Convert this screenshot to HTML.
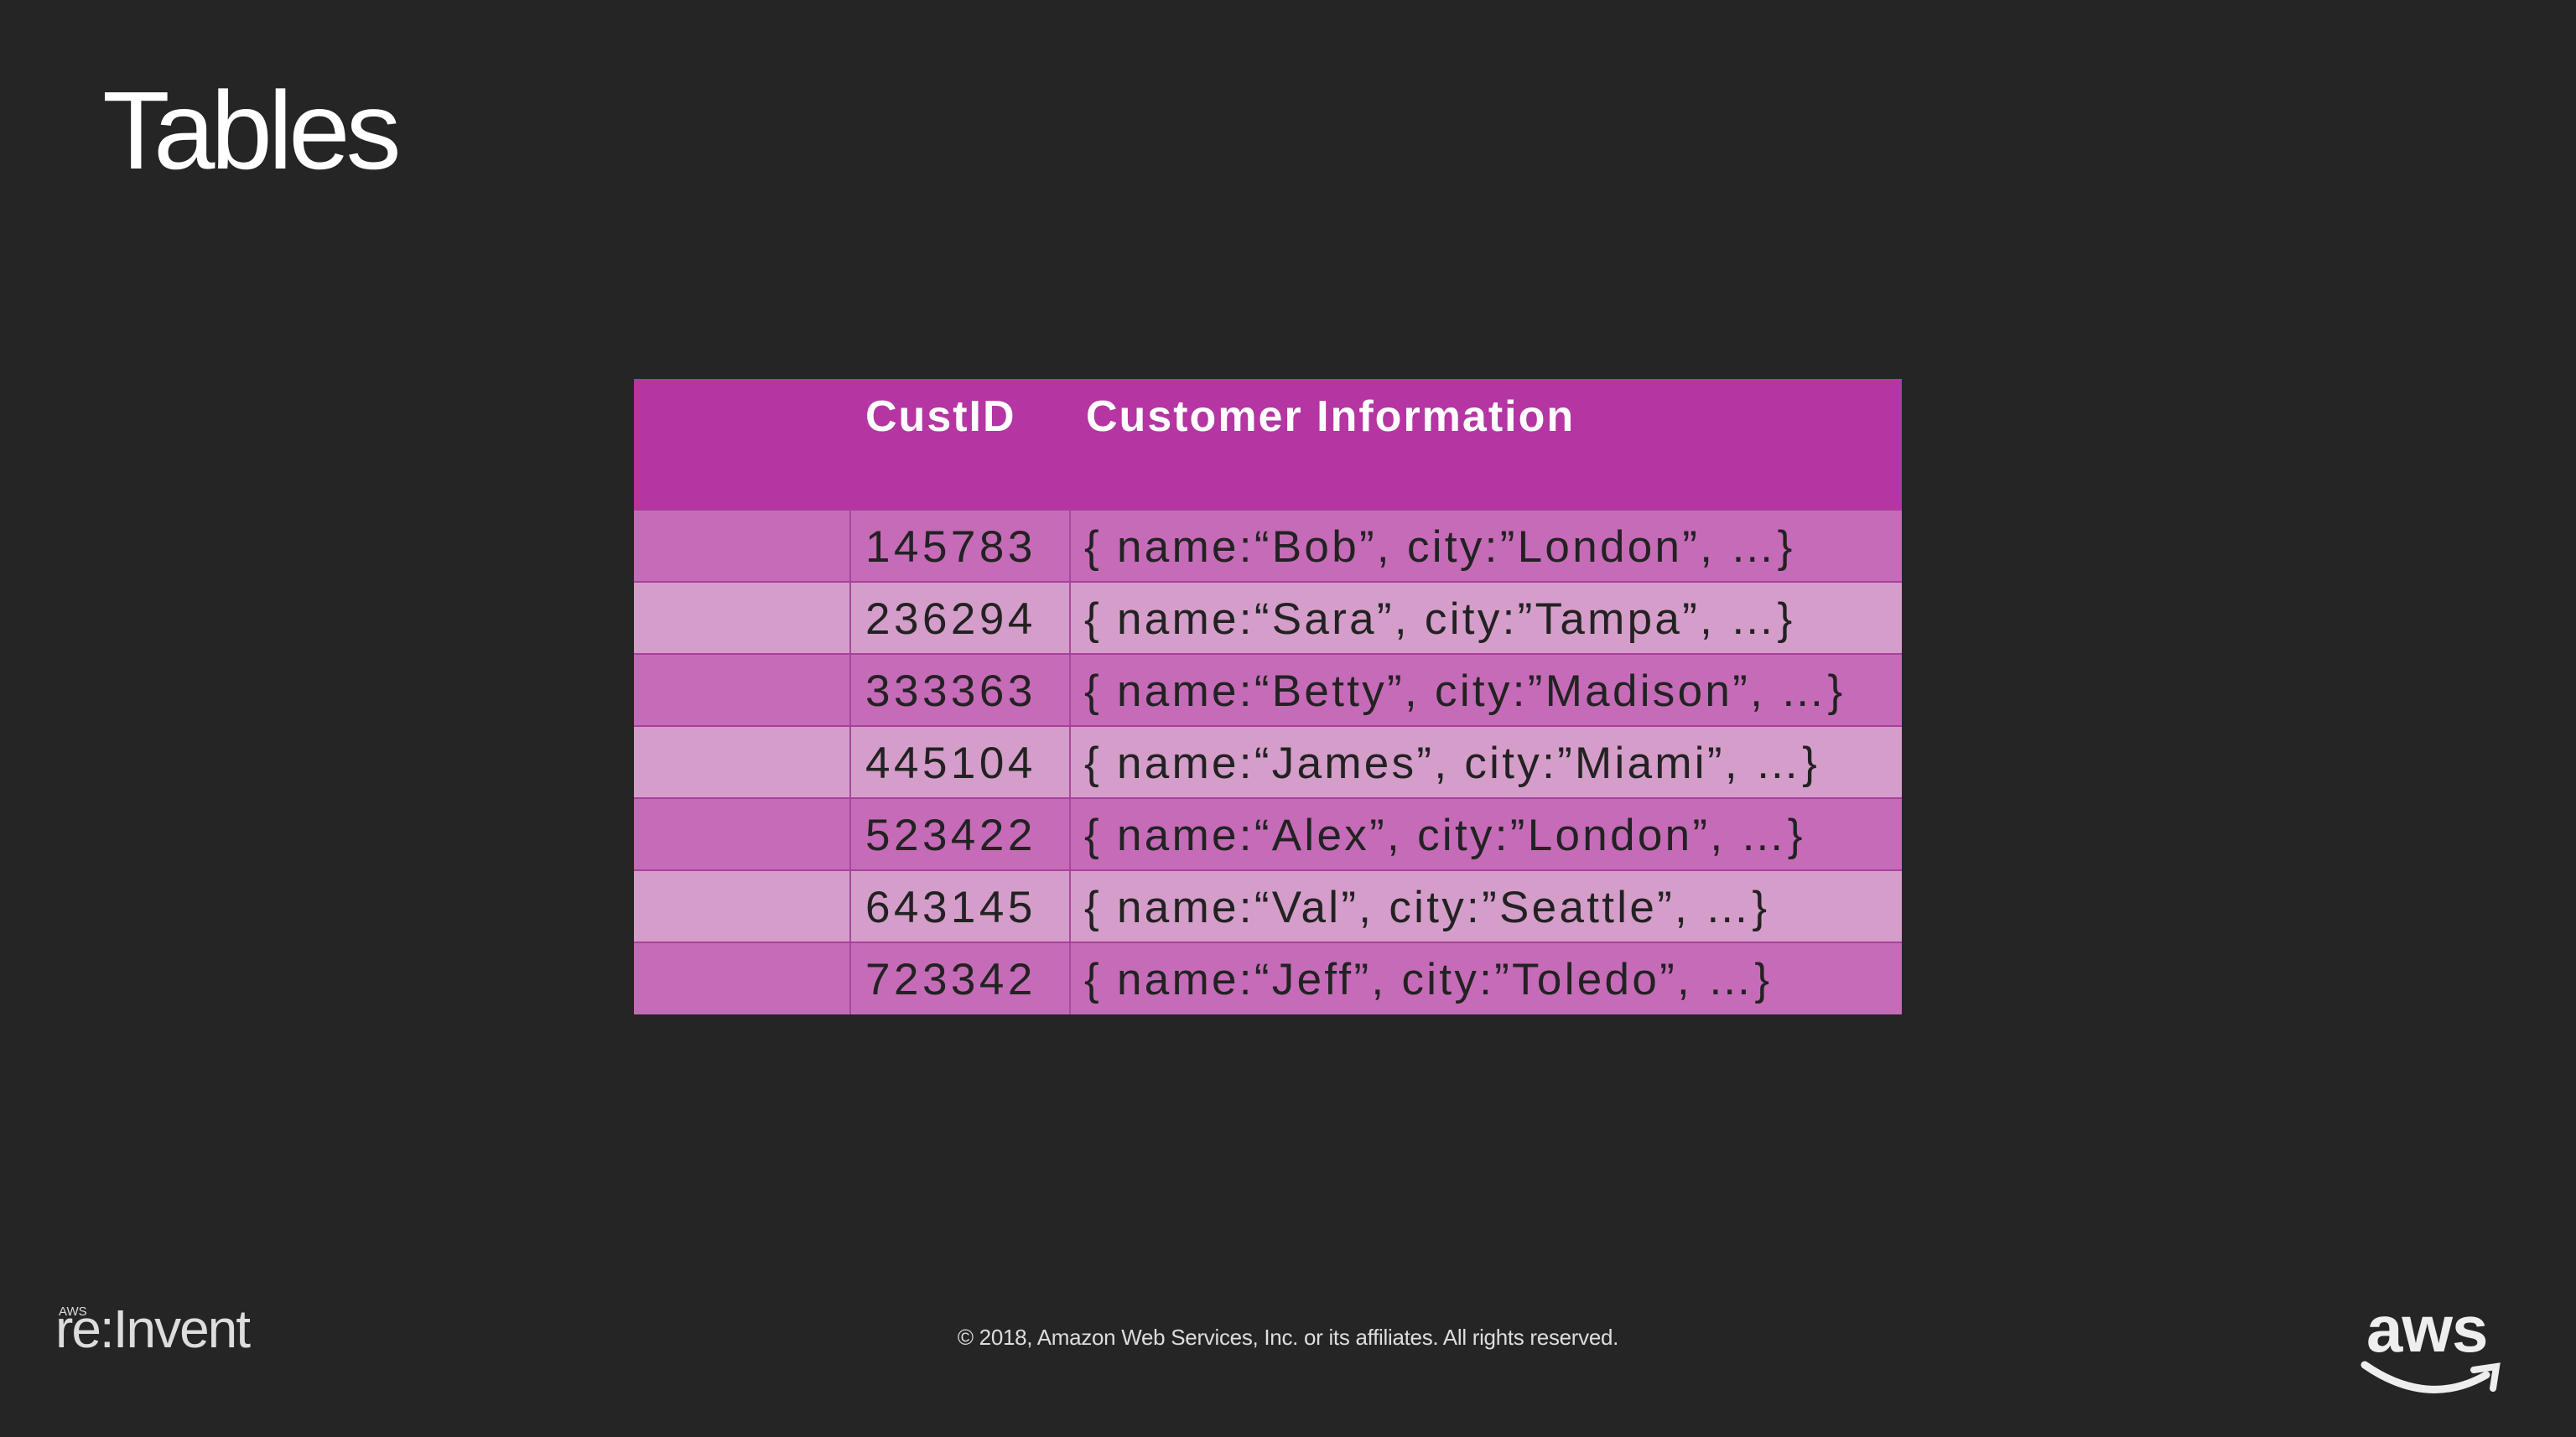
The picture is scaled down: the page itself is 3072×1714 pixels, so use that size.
<!DOCTYPE html>
<html><head><style>
html,body{margin:0;padding:0}
body{width:3072px;height:1714px;background:#242524;position:relative;overflow:hidden;font-family:"Liberation Sans",sans-serif}
.title{position:absolute;left:122px;top:80px;font-size:132px;color:#fff;letter-spacing:-5px;font-weight:300}
.tbl{position:absolute;left:756px;top:452px;width:1512px;height:758px;background:#b535a3}
.hdr{position:absolute;left:0;top:0;width:1512px;height:152px;background:#b535a3}
.hdr span{position:absolute;top:10px;font-size:52px;font-weight:bold;color:#fff;line-height:70px;letter-spacing:2px}
.row{position:absolute;left:0;width:1512px;height:86px;border-top:2px solid #a9409c;box-sizing:border-box}
.d{background:#c66bb8}.l{background:#d59dca}
.row .c1,.row .c2{position:absolute;top:0;height:84px;border-left:2px solid #a64a9a}
.row .c1{left:257px;width:264px}.row .c2{left:519px;width:990px}
.row span{position:absolute;font-size:53px;color:#222;line-height:84px;top:2px;white-space:nowrap;letter-spacing:3.3px}
.row span.n{letter-spacing:4.5px}
.foot{position:absolute;top:1580px;left:0;width:3072px;text-align:center;font-size:26px;color:#ddd;letter-spacing:-0.3px}
</style></head><body>
<div class="title">Tables</div>
<div class="tbl">
<div class="hdr"><span style="left:276px">CustID</span><span style="left:539px">Customer Information</span></div>
<div class="row d" style="top:155px"><div class="c1"></div><div class="c2"></div><span class="n" style="left:276px">145783</span><span style="left:537px">{ name:“Bob”, city:”London”, …}</span></div>
<div class="row l" style="top:241px"><div class="c1"></div><div class="c2"></div><span class="n" style="left:276px">236294</span><span style="left:537px">{ name:“Sara”, city:”Tampa”, …}</span></div>
<div class="row d" style="top:327px"><div class="c1"></div><div class="c2"></div><span class="n" style="left:276px">333363</span><span style="left:537px">{ name:“Betty”, city:”Madison”, …}</span></div>
<div class="row l" style="top:413px"><div class="c1"></div><div class="c2"></div><span class="n" style="left:276px">445104</span><span style="left:537px">{ name:“James”, city:”Miami”, …}</span></div>
<div class="row d" style="top:499px"><div class="c1"></div><div class="c2"></div><span class="n" style="left:276px">523422</span><span style="left:537px">{ name:“Alex”, city:”London”, …}</span></div>
<div class="row l" style="top:585px"><div class="c1"></div><div class="c2"></div><span class="n" style="left:276px">643145</span><span style="left:537px">{ name:“Val”, city:”Seattle”, …}</span></div>
<div class="row d" style="top:671px;height:87px"><div class="c1" style="height:85px"></div><div class="c2" style="height:85px"></div><span class="n" style="left:276px">723342</span><span style="left:537px">{ name:“Jeff”, city:”Toledo”, …}</span></div>
</div>
<div style="position:absolute;left:70px;top:1556px;color:#ddd;font-size:15px">AWS</div>
<div style="position:absolute;left:66px;top:1548px;color:#ddd;font-size:64px;letter-spacing:-2px;font-weight:300">re:Invent</div>
<div class="foot">© 2018, Amazon Web Services, Inc. or its affiliates. All rights reserved.</div>
<div style="position:absolute;left:2822px;top:1540px;color:#eee;font-size:78px;font-weight:bold;letter-spacing:-1px">aws</div>
<svg style="position:absolute;left:2815px;top:1620px" width="180" height="50" viewBox="0 0 180 50"><path d="M5 8 Q80 60 150 20" stroke="#eee" stroke-width="9" fill="none" stroke-linecap="round"/><path d="M135 14 L162 10 L158 36" stroke="#eee" stroke-width="8" fill="none" stroke-linecap="round"/></svg>
</body></html>
